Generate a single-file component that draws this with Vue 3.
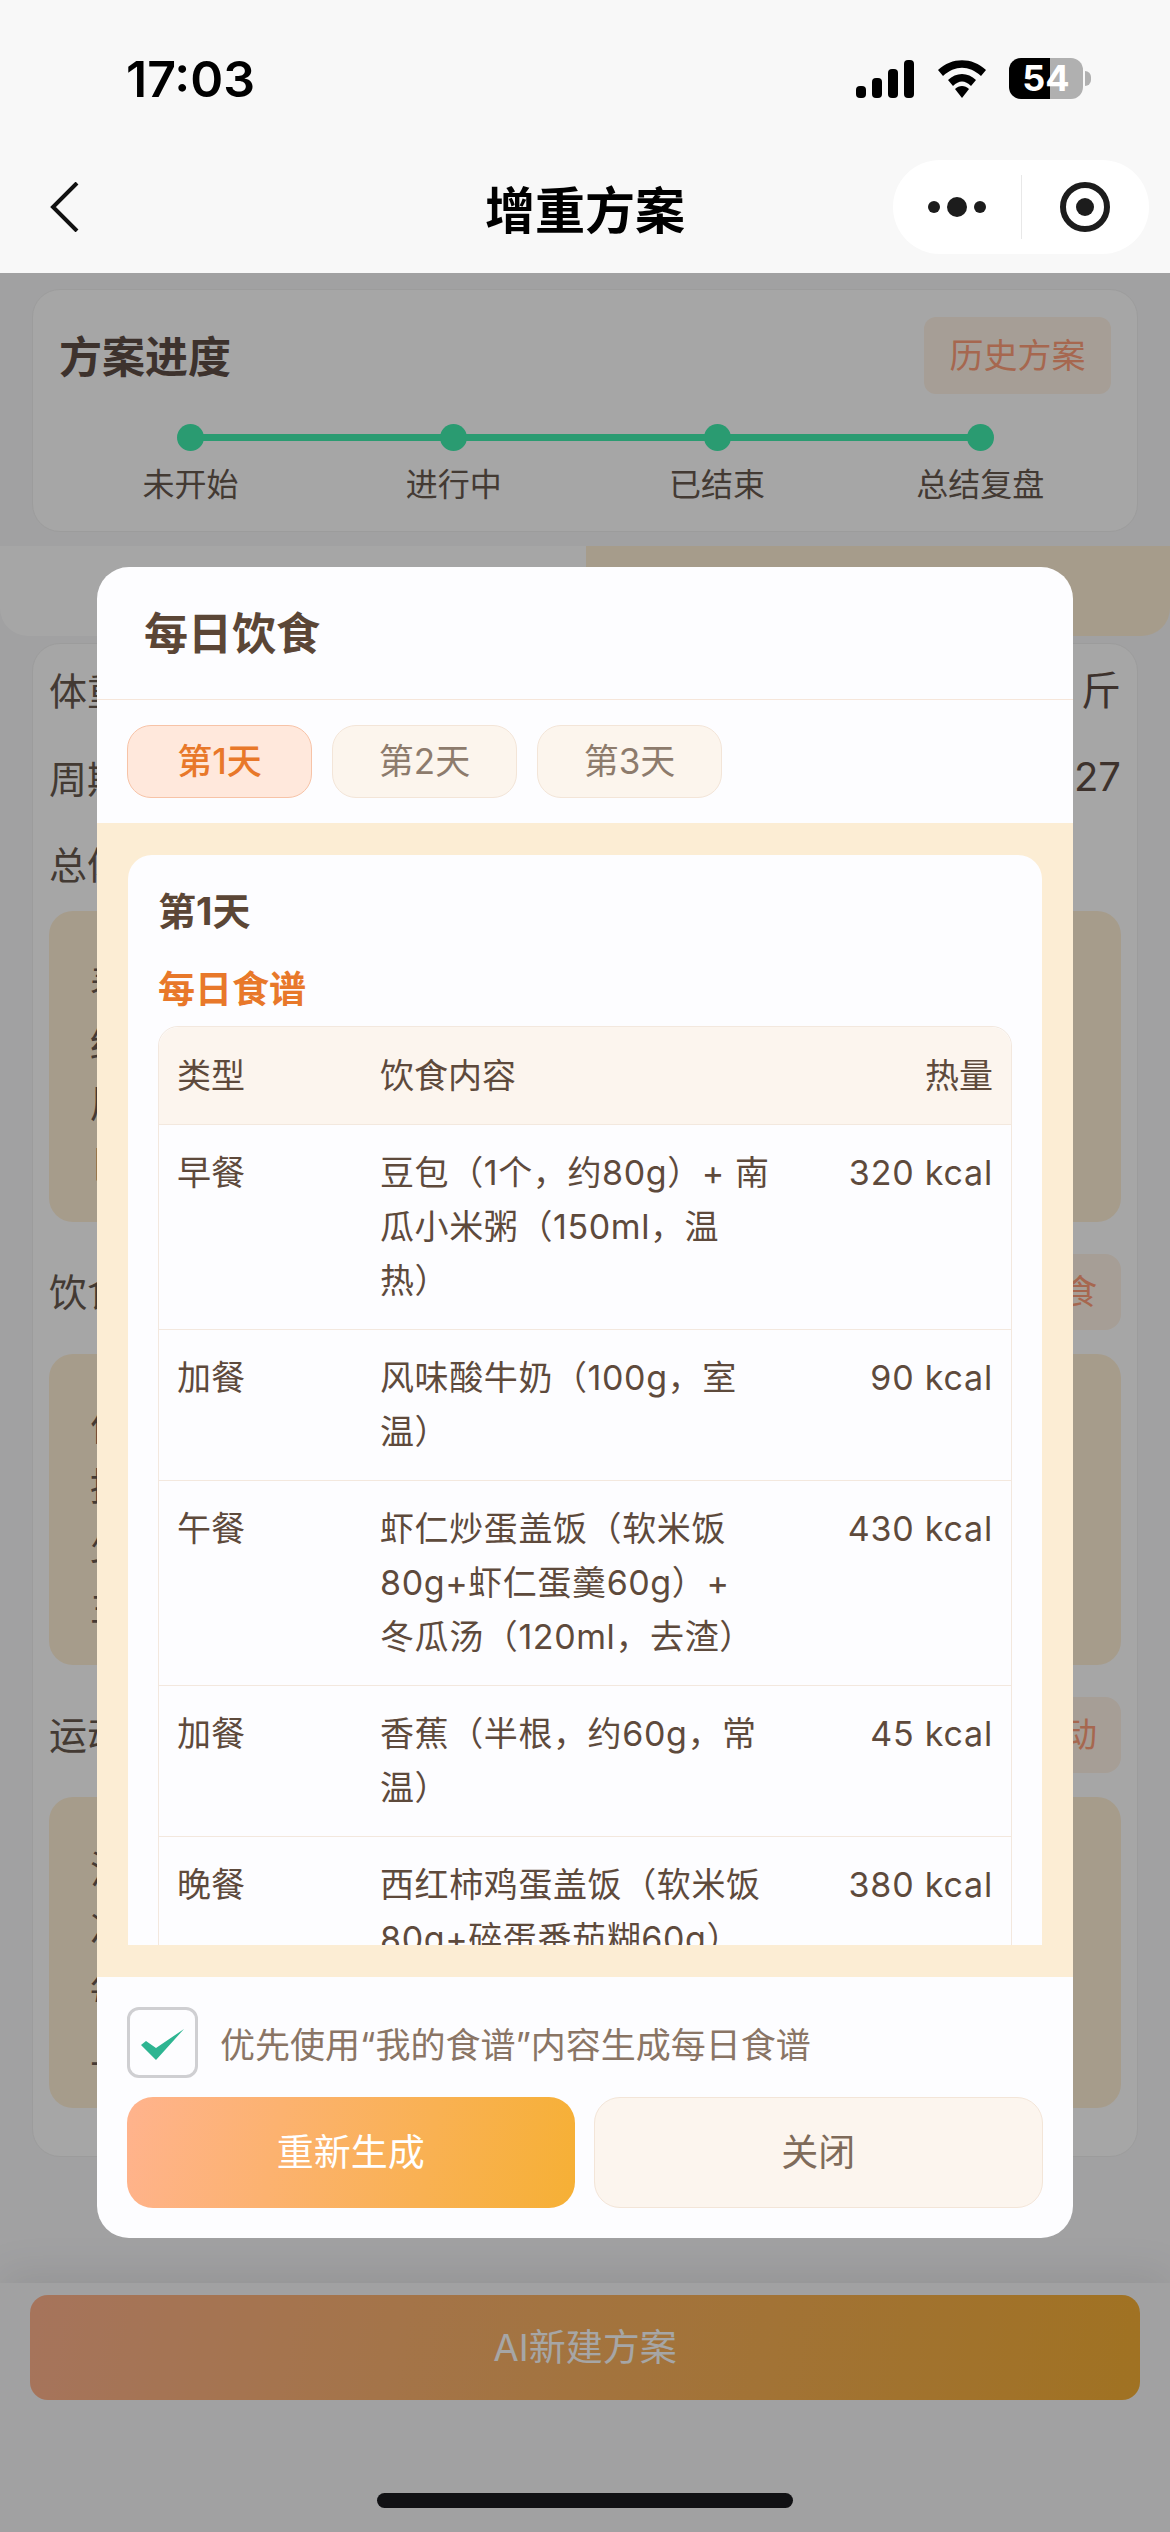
<script setup>
const steps = ['未开始', '进行中', '已结束', '总结复盘']
const days = ['第1天', '第2天', '第3天']
// 每行按设计稿断行
const meals = [
  { type: '早餐', food: ['豆包（1个，约80g）+ 南', '瓜小米粥（150ml，温', '热）'], kcal: '320 kcal' },
  { type: '加餐', food: ['风味酸牛奶（100g，室', '温）'], kcal: '90 kcal' },
  { type: '午餐', food: ['虾仁炒蛋盖饭（软米饭', '80g+虾仁蛋羹60g）+', '冬瓜汤（120ml，去渣）'], kcal: '430 kcal' },
  { type: '加餐', food: ['香蕉（半根，约60g，常', '温）'], kcal: '45 kcal' },
  { type: '晚餐', food: ['西红柿鸡蛋盖饭（软米饭', '80g+碎蛋番茄糊60g）'], kcal: '380 kcal' },
]
const boxes = [
  { label: '总体目标', action: '', lines: ['表现', '结合', '周期', '日常'] },
  { label: '饮食建议', action: '每日饮食', lines: ['优先', '控制', '少量', '主食'] },
  { label: '运动建议', action: '每日运动', lines: ['注意', '次数', '每周', '上午'] },
]
</script>

<template>
  <div class="page">
    <div class="status">
      <span class="time">17:03</span>
      <div class="status-icons">
        <svg width="60" height="38" viewBox="0 0 60 38">
          <rect x="1" y="26" width="10" height="12" rx="4" />
          <rect x="17" y="18" width="10" height="20" rx="4" />
          <rect x="33" y="9" width="10" height="29" rx="4" />
          <rect x="49" y="0" width="10" height="38" rx="4" />
        </svg>
        <svg width="50" height="38" viewBox="0 0 50 38">
          <path d="M1 10 C15 -3 35 -3 49 10 L44 16 C32 5 18 5 6 16 Z" />
          <path d="M11 20 C19 12 31 12 39 20 L34 26 C28 20 22 20 16 26 Z" />
          <path d="M18 29 C22 25 28 25 32 29 L25 38 Z" />
        </svg>
        <div class="battery">
          <span>54</span>
          <i></i>
        </div>
      </div>
    </div>

    <div class="nav">
      <svg class="back" width="30" height="50" viewBox="0 0 30 50">
        <path d="M27 1 L3 25 L27 49" />
      </svg>
      <span class="nav-title">增重方案</span>
      <div class="capsule">
        <div class="more"><i></i><b></b><i></i></div>
        <span class="capsule-line"></span>
        <div class="target"><i></i></div>
      </div>
    </div>

    <div class="content">
      <section class="card progress">
        <div class="progress-head">
          <h2>方案进度</h2>
          <span class="history">历史方案</span>
        </div>
        <div class="steps">
          <div v-for="(s, i) in steps" :key="s" class="step">
            <span v-if="i < steps.length - 1" class="step-line"></span>
            <span class="dot"></span>
            <span class="step-label">{{ s }}</span>
          </div>
        </div>
      </section>

      <div class="switch">
        <span class="switch-off"></span>
        <span class="switch-on"></span>
      </div>

      <section class="card detail">
        <div class="row"><span class="label">体重目标</span><span class="label value">增重 3 斤</span></div>
        <div class="row"><span class="label">周期安排</span><span class="label value">2025.06.27</span></div>
        <template v-for="b in boxes" :key="b.label">
          <div class="row row-tall" :class="{ plain: !b.action }">
            <span class="label">{{ b.label }}</span>
            <span v-if="b.action" class="action">{{ b.action }}</span>
          </div>
          <div class="box">
            <p v-for="l in b.lines" :key="l">{{ l }}</p>
          </div>
        </template>
      </section>

      <div class="footer">
        <div class="new-plan">AI新建方案</div>
      </div>
    </div>

    <div class="overlay"></div>

    <div class="modal">
      <div class="modal-title">每日饮食</div>
      <div class="tabs">
        <span v-for="(d, i) in days" :key="d" class="tab" :class="{ active: i === 0 }">{{ d }}</span>
      </div>
      <div class="modal-body">
        <div class="day-card">
          <div class="day-title">第1天</div>
          <div class="recipe-title">每日食谱</div>
          <div class="table">
            <div class="tr th">
              <span>类型</span>
              <span>饮食内容</span>
              <span class="num">热量</span>
            </div>
            <div v-for="(m, i) in meals" :key="i" class="tr">
              <span>{{ m.type }}</span>
              <span><span v-for="l in m.food" :key="l" class="food-line">{{ l }}</span></span>
              <span class="num kcal">{{ m.kcal }}</span>
            </div>
          </div>
        </div>
      </div>
      <div class="modal-foot">
        <div class="check-row">
          <span class="check">
            <svg width="44" height="32" viewBox="0 0 44 32">
              <path d="M0 16 L5 12 L15 19 L43 0 L15 31 Z" />
            </svg>
          </span>
          <span class="check-text">优先使用“我的食谱”内容生成每日食谱</span>
        </div>
        <div class="btns">
          <span class="btn primary">重新生成</span>
          <span class="btn plain-btn">关闭</span>
        </div>
      </div>
    </div>

    <div class="home-bar"></div>
  </div>
</template>

<style>
body {
  margin: 0;
}
</style>

<style scoped>
.page {
  position: relative;
  width: 1170px;
  height: 2532px;
  overflow: hidden;
  background: #f7f7f9;
  font-family: Inter, "Noto Sans CJK SC", sans-serif;
  color: #5e4a3c;
}
.status {
  height: 153px;
  background: #f8f8f8;
  display: flex;
  justify-content: space-between;
  align-items: center;
  padding: 4px 0 0 126px;
  box-sizing: border-box;
}
.time {
  font-size: 50px;
  font-weight: 600;
  color: #000;
}
.status-icons {
  display: flex;
  align-items: center;
  gap: 22px;
  padding-right: 87px;
}
.status-icons svg {
  fill: #000;
  display: block;
}
.battery {
  position: relative;
  width: 74px;
  height: 41px;
  border-radius: 12px;
  background: linear-gradient(90deg, #000 55%, #b0b0b0 55%);
  color: #fff;
  font-size: 36px;
  font-weight: 700;
  text-align: center;
  line-height: 41px;
}
.battery i {
  position: absolute;
  right: -8px;
  top: 13px;
  width: 6px;
  height: 15px;
  border-radius: 0 8px 8px 0;
  background: #b0b0b0;
}
.nav {
  position: relative;
  height: 120px;
  padding-bottom: 12px;
  box-sizing: border-box;
  background: #f8f8f8;
  display: flex;
  align-items: center;
  justify-content: center;
}
.back {
  position: absolute;
  left: 50px;
  top: 29px;
  fill: none;
  stroke: #111;
  stroke-width: 4;
}
.nav-title {
  font-size: 50px;
  font-weight: 600;
  color: #000;
}
.capsule {
  position: absolute;
  right: 21px;
  top: 7px;
  width: 256px;
  height: 94px;
  border-radius: 47px;
  background: #fff;
  display: flex;
  align-items: center;
}
.more {
  width: 128px;
  display: flex;
  justify-content: center;
  align-items: center;
  gap: 7px;
}
.more i {
  width: 12px;
  height: 12px;
  border-radius: 50%;
  background: #1c1c1c;
}
.more b {
  width: 20px;
  height: 20px;
  border-radius: 50%;
  background: #1c1c1c;
}
.capsule-line {
  width: 1px;
  height: 64px;
  background: #e8e8e8;
}
.target {
  width: 50px;
  height: 50px;
  margin-left: 38px;
  border: 6px solid #1c1c1c;
  border-radius: 50%;
  box-sizing: border-box;
  display: flex;
  align-items: center;
  justify-content: center;
}
.target i {
  width: 18px;
  height: 18px;
  border-radius: 50%;
  background: #1c1c1c;
}
.content {
  padding-top: 16px;
}
.card {
  margin: 0 32px;
  background: #fff;
  border: 1px solid #f0f0f0;
  border-radius: 28px;
  box-sizing: border-box;
}
.progress {
  height: 243px;
  padding: 27px 26px 0;
}
.progress-head {
  display: flex;
  justify-content: space-between;
  align-items: center;
}
.progress-head h2 {
  margin: 0;
  padding-bottom: 4px;
  font-size: 43px;
  font-weight: 700;
  color: #5f4e46;
}
.history {
  width: 187px;
  height: 77px;
  line-height: 77px;
  text-align: center;
  border-radius: 12px;
  background: #fff3e6;
  color: #ff9f7a;
  font-size: 34px;
}
.steps {
  display: flex;
  margin: 30px -1px 0 0;
}
.step {
  position: relative;
  flex: 1;
  display: flex;
  flex-direction: column;
  align-items: center;
}
.dot {
  position: relative;
  width: 27px;
  height: 27px;
  border-radius: 50%;
  background: #41eeae;
}
.step-line {
  position: absolute;
  left: 50%;
  width: 100%;
  top: 10px;
  height: 7px;
  background: #41eeae;
}
.step-label {
  margin-top: 12px;
  font-size: 32px;
  line-height: 44px;
  color: #68594f;
}
.switch {
  display: flex;
  height: 90px;
  margin: 14px 0 7px;
}
.switch-off {
  width: 586px;
  background: #fff;
  border-radius: 0 0 0 28px;
}
.switch-on {
  flex: 1;
  background: #fff0d6;
  border-radius: 0 0 28px 0;
}
.detail {
  height: 1514px;
  padding: 0 16px;
}
.row {
  display: flex;
  justify-content: space-between;
  align-items: center;
  height: 88px;
  font-size: 38px;
  color: #68594f;
}
.row:first-child {
  margin-top: 3px;
}
.label {
  margin-top: -6px;
}
.value {
  font-size: 40px;
  color: #5f4e46;
}
.row-tall {
  height: 76px;
  margin-bottom: 24px;
}
.row-tall.plain {
  margin-top: 4px;
  margin-bottom: 8px;
}
.action {
  width: 170px;
  height: 76px;
  line-height: 76px;
  text-align: right;
  padding-right: 24px;
  box-sizing: border-box;
  border-radius: 16px;
  background: #fff3e6;
  color: #ff9f7a;
  font-size: 34px;
}
.box {
  height: 311px;
  margin-bottom: 32px;
  padding: 42px 41px 0;
  border-radius: 24px;
  background: #fff0d6;
  box-sizing: border-box;
}
.box p {
  margin: 0;
  font-size: 38px;
  line-height: 60px;
  color: #6b5a50;
}
.footer {
  margin-top: 126px;
  height: 249px;
  padding: 12px 30px 0;
  box-sizing: border-box;
  background: #f7f7f9;
  box-shadow: 0 -10px 40px rgba(0, 0, 0, 0.08);
}
.new-plan {
  height: 105px;
  line-height: 105px;
  border-radius: 18px;
  background: linear-gradient(100deg, #ffb38d, #f6b035);
  color: #fff;
  text-align: center;
  font-size: 37px;
}
.overlay {
  position: absolute;
  left: 0;
  right: 0;
  top: 273px;
  bottom: 0;
  background: rgba(0, 0, 0, 0.35);
}
.modal {
  position: absolute;
  left: 97px;
  top: 567px;
  width: 976px;
  height: 1671px;
  border-radius: 32px;
  background: #fdfdff;
  overflow: hidden;
  display: flex;
  flex-direction: column;
}
.modal-title {
  height: 132px;
  line-height: 135px;
  padding-left: 47px;
  border-bottom: 1px solid #f6e6da;
  font-size: 44px;
  font-weight: 700;
  color: #5b4636;
}
.tabs {
  display: flex;
  gap: 20px;
  height: 123px;
  box-sizing: border-box;
  padding: 25px 0 0 30px;
}
.tab {
  width: 185px;
  height: 73px;
  line-height: 71px;
  text-align: center;
  box-sizing: border-box;
  border: 1px solid #f3e5d8;
  border-radius: 24px;
  background: #fcf5ed;
  color: #8d7b6c;
  font-size: 35px;
}
.tab.active {
  border-color: #f7c3a7;
  background: #ffe8dc;
  color: #e8782a;
  font-weight: 500;
}
.modal-body {
  height: 1154px;
  padding: 32px 31px;
  box-sizing: border-box;
  background: #fcedd4;
}
.day-card {
  height: 1090px;
  overflow: hidden;
  padding: 0 30px;
  border-radius: 24px 24px 0 0;
  background: #fdfdff;
}
.day-title {
  padding-top: 32px;
  font-size: 38px;
  line-height: 48px;
  font-weight: 700;
  color: #5b4636;
}
.recipe-title {
  padding-top: 31px;
  font-size: 37px;
  line-height: 48px;
  font-weight: 700;
  color: #e8782a;
}
.table {
  margin-top: 12px;
  border: 1px solid #f3e8de;
  border-radius: 20px 20px 0 0;
}
.tr {
  display: grid;
  grid-template-columns: 203px 416px 1fr;
  padding: 21px 18px;
  font-size: 34px;
  line-height: 54px;
  color: #5e4a3c;
  border-bottom: 1px solid #f3e8de;
}
.th {
  height: 98px;
  box-sizing: border-box;
  align-items: center;
  padding: 0 18px;
  background: #fcf5ee;
  border-radius: 20px 20px 0 0;
}
.food-line {
  display: block;
  white-space: nowrap;
  letter-spacing: 0.6px;
}
.num {
  text-align: right;
}
.kcal {
  letter-spacing: 0.8px;
}
.modal-foot {
  flex: 1;
  padding: 30px 30px 0;
}
.check-row {
  display: flex;
  align-items: center;
  gap: 22px;
  height: 71px;
}
.check {
  width: 71px;
  height: 71px;
  padding-top: 4px;
  box-sizing: border-box;
  border: 3px solid #cfcfd2;
  border-radius: 12px;
  display: flex;
  align-items: center;
  justify-content: center;
  flex: none;
}
.check svg {
  fill: #2eb592;
}
.check-text {
  font-size: 35px;
  color: #8a7565;
}
.btns {
  display: flex;
  gap: 19px;
  margin-top: 19px;
}
.btn {
  flex: 1;
  height: 111px;
  line-height: 111px;
  text-align: center;
  box-sizing: border-box;
  border-radius: 26px;
  font-size: 37px;
}
.primary {
  background: linear-gradient(100deg, #ffb38d, #f6b035);
  color: #fff;
}
.plain-btn {
  background: #fcf5ee;
  border: 1px solid #f3e5d8;
  line-height: 109px;
  color: #7f6b5a;
}
.home-bar {
  position: absolute;
  left: 377px;
  top: 2493px;
  width: 416px;
  height: 15px;
  border-radius: 8px;
  background: #111114;
}
</style>
